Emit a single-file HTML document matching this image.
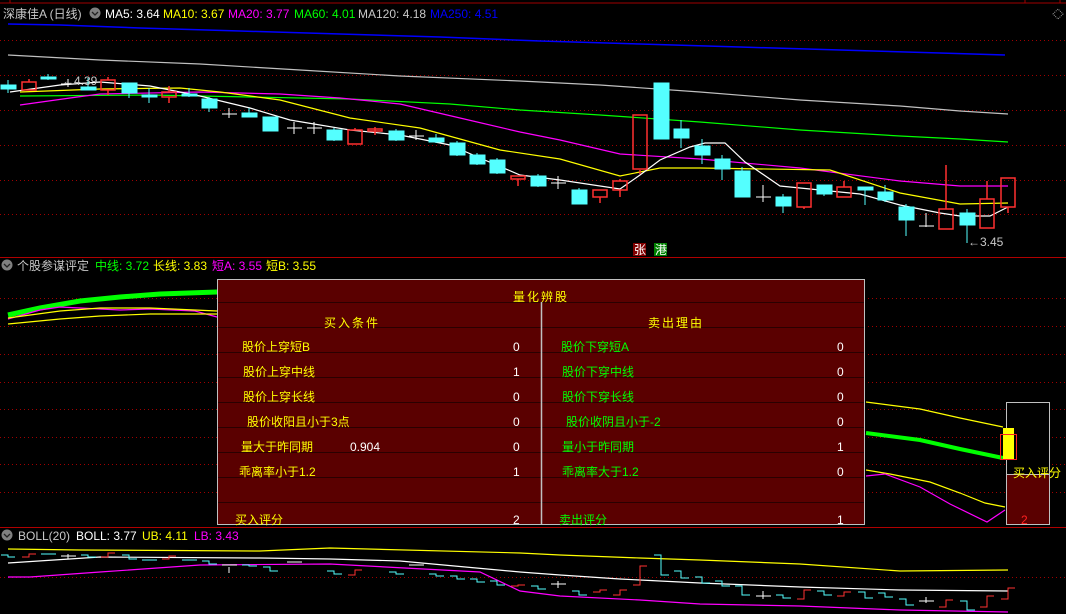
<!DOCTYPE html>
<html><head><meta charset="utf-8"><style>
html,body{margin:0;padding:0;background:#000;width:1066px;height:614px;overflow:hidden}
svg{display:block}
text{font-family:"Liberation Sans","Noto Sans CJK SC",sans-serif;font-size:12px}
</style></head><body>
<svg width="1066" height="614" viewBox="0 0 1066 614" xmlns="http://www.w3.org/2000/svg">
<rect width="1066" height="614" fill="#000"/>
<line x1="0" y1="3" x2="1066" y2="3" stroke="#a00000" stroke-width="1"/>
<line x1="10" y1="0" x2="10" y2="3" stroke="#a00000"/><line x1="1025" y1="0" x2="1025" y2="3" stroke="#a00000"/><line x1="1060" y1="0" x2="1060" y2="3" stroke="#a00000"/>
<g stroke="#a00000" stroke-dasharray="1,3" stroke-width="1">
<line x1="0" y1="40.5" x2="1066" y2="40.5"/><line x1="0" y1="75.5" x2="1066" y2="75.5"/><line x1="0" y1="110.5" x2="1066" y2="110.5"/>
<line x1="0" y1="145.5" x2="1066" y2="145.5"/><line x1="0" y1="180.5" x2="1066" y2="180.5"/><line x1="0" y1="214.5" x2="1066" y2="214.5"/>
<line x1="0" y1="298.5" x2="1066" y2="298.5"/><line x1="0" y1="326.5" x2="1066" y2="326.5"/><line x1="0" y1="354.5" x2="1066" y2="354.5"/><line x1="0" y1="382.5" x2="1066" y2="382.5"/>
<line x1="0" y1="409.5" x2="1066" y2="409.5"/><line x1="0" y1="437.5" x2="1066" y2="437.5"/><line x1="0" y1="464.5" x2="1066" y2="464.5"/><line x1="0" y1="492.5" x2="1066" y2="492.5"/>
<line x1="0" y1="577.5" x2="1066" y2="577.5"/>
</g>
<line x1="0" y1="257.5" x2="1066" y2="257.5" stroke="#b00000"/>
<line x1="0" y1="527.5" x2="1066" y2="527.5" stroke="#b00000"/>

<text x="3" y="18" fill="#c8c8c8" font-size="13">深康佳A (日线)</text>
<circle cx="95" cy="13" r="5.5" fill="#808080"/><path d="M92 12 L95 15 L98 12" stroke="#222" fill="none" stroke-width="1.3"/>
<text x="105" y="18" fill="#fff">MA5: 3.64</text>
<text x="163" y="18" fill="#ffff00">MA10: 3.67</text>
<text x="228" y="18" fill="#ff00ff">MA20: 3.77</text>
<text x="294" y="18" fill="#00ff00">MA60: 4.01</text>
<text x="358" y="18" fill="#c8c8c8">MA120: 4.18</text>
<text x="430" y="18" fill="#0000ff">MA250: 4.51</text>
<path d="M1053 14 L1058 9 L1063 14 L1058 19 Z" fill="none" stroke="#999" stroke-dasharray="1,1"/>

<polyline fill="none" stroke="#0000ff" stroke-width="1.5" points="8,24 60,25 140,28 240,31 340,34 440,37 540,41 640,44 740,47 840,50 940,53 1005,55"/>
<polyline fill="none" stroke="#c0c0c0" stroke-width="1.2" points="8,55 100,60 200,64 300,70 400,76 520,81 600,85 700,92 800,100 900,106 960,111 1008,114"/>
<polyline fill="none" stroke="#00ff00" stroke-width="1.2" points="20,96 150,95 250,97 350,99 450,104 520,110 600,115 700,122 800,130 900,136 960,139 1008,142"/>
<polyline fill="none" stroke="#ff00ff" stroke-width="1.2" points="20,105 70,98 100,94 200,92 280,94 340,98 400,104 460,118 520,132 560,140 620,154 700,159 800,168 900,181 960,186 1008,186"/>
<polyline fill="none" stroke="#ffff00" stroke-width="1.2" points="20,92 100,89 180,88 220,92 280,100 350,118 420,128 500,150 560,159 620,176 660,168 700,168 830,170 900,193 960,204 1008,203"/>
<polyline fill="none" stroke="#ffffff" stroke-width="1.2" points="10,92 60,85 100,82 150,86 200,96 250,108 290,120 350,130 400,135 450,145 480,158 520,175 560,180 620,189 640,175 660,160 690,147 705,143 725,143 745,162 780,186 820,190 860,194 900,205 940,213 960,216 990,216 1008,207"/>

<g stroke-width="1">
<g fill="#54ffff" stroke="#54ffff">
<line x1="8" y1="80" x2="8" y2="93"/><rect x="1" y="85" width="15" height="4"/>
<line x1="48" y1="74" x2="48" y2="80"/><rect x="41" y="77" width="15" height="2"/>
<line x1="88" y1="78" x2="88" y2="90"/><rect x="81" y="87" width="15" height="3"/>
<line x1="129" y1="83" x2="129" y2="98"/><rect x="122" y="83" width="15" height="10"/>
<line x1="149" y1="88" x2="149" y2="103"/><rect x="142" y="95" width="15" height="2"/>
<line x1="189" y1="88" x2="189" y2="97"/><rect x="182" y="94" width="15" height="2"/>
<line x1="209" y1="97" x2="209" y2="112"/><rect x="202" y="99" width="15" height="9"/>
<line x1="249" y1="108" x2="249" y2="117"/><rect x="242" y="113" width="15" height="4"/>
<rect x="263" y="117" width="15" height="14"/>
<line x1="334" y1="128" x2="334" y2="141"/><rect x="327" y="130" width="15" height="10"/>
<line x1="396" y1="129" x2="396" y2="141"/><rect x="389" y="131" width="15" height="9"/>
<line x1="436" y1="134" x2="436" y2="143"/><rect x="429" y="138" width="15" height="4"/>
<line x1="457" y1="141" x2="457" y2="156"/><rect x="450" y="143" width="15" height="12"/>
<line x1="477" y1="153" x2="477" y2="165"/><rect x="470" y="155" width="15" height="9"/>
<line x1="497" y1="158" x2="497" y2="174"/><rect x="490" y="160" width="15" height="13"/>
<line x1="538" y1="174" x2="538" y2="187"/><rect x="531" y="176" width="15" height="10"/>
<line x1="579" y1="188" x2="579" y2="204"/><rect x="572" y="190" width="15" height="14"/>
<rect x="654" y="83" width="15" height="56"/>
<line x1="681" y1="120" x2="681" y2="148"/><rect x="674" y="129" width="15" height="9"/>
<line x1="702" y1="139" x2="702" y2="164"/><rect x="695" y="146" width="15" height="9"/>
<line x1="722" y1="155" x2="722" y2="180"/><rect x="715" y="159" width="15" height="10"/>
<line x1="742" y1="167" x2="742" y2="197"/><rect x="735" y="171" width="15" height="26"/>
<line x1="783" y1="194" x2="783" y2="213"/><rect x="776" y="197" width="15" height="9"/>
<line x1="824" y1="185" x2="824" y2="196"/><rect x="817" y="185" width="15" height="9"/>
<line x1="865" y1="187" x2="865" y2="205"/><rect x="858" y="187" width="15" height="3"/>
<line x1="885" y1="185" x2="885" y2="202"/><rect x="878" y="192" width="15" height="8"/>
<line x1="906" y1="204" x2="906" y2="236"/><rect x="899" y="207" width="15" height="13"/>
<line x1="967" y1="209" x2="967" y2="243"/><rect x="960" y="213" width="15" height="12"/>
</g>
<g fill="none" stroke="#ff3030" stroke-width="1.5">
<line x1="29" y1="79" x2="29" y2="82"/><rect x="22" y="82" width="14" height="8"/>
<line x1="108" y1="77" x2="108" y2="80"/><line x1="108" y1="90" x2="108" y2="95"/><rect x="101" y="80" width="14" height="10"/>
<line x1="169" y1="86" x2="169" y2="92"/><line x1="169" y1="97" x2="169" y2="103"/><rect x="162" y="92" width="14" height="5"/>
<line x1="355" y1="128" x2="355" y2="130"/><rect x="348" y="130" width="14" height="14"/>
<line x1="375" y1="127" x2="375" y2="135"/><rect x="368" y="129" width="14" height="2"/>
<line x1="518" y1="179" x2="518" y2="186"/><rect x="511" y="176" width="14" height="3"/>
<line x1="600" y1="197" x2="600" y2="203"/><rect x="593" y="190" width="14" height="7"/>
<line x1="620" y1="179" x2="620" y2="181"/><line x1="620" y1="190" x2="620" y2="197"/><rect x="613" y="181" width="14" height="9"/>
<line x1="640" y1="170" x2="640" y2="174"/><rect x="633" y="115" width="14" height="54"/>
<line x1="804" y1="207" x2="804" y2="209"/><rect x="797" y="183" width="14" height="24"/>
<line x1="844" y1="181" x2="844" y2="187"/><rect x="837" y="187" width="14" height="10"/>
<line x1="946" y1="165" x2="946" y2="209"/><rect x="939" y="209" width="14" height="20"/>
<line x1="987" y1="181" x2="987" y2="199"/><rect x="980" y="199" width="14" height="29"/>
<line x1="1008" y1="207" x2="1008" y2="213"/><rect x="1001" y="178" width="14" height="29"/>
</g>
<g stroke="#fff">
<line x1="61" y1="84" x2="76" y2="84"/><line x1="68" y1="79" x2="68" y2="87"/>
<line x1="222" y1="114" x2="237" y2="114"/><line x1="229" y1="108" x2="229" y2="118"/>
<line x1="287" y1="128" x2="302" y2="128"/><line x1="294" y1="122" x2="294" y2="134"/>
<line x1="307" y1="128" x2="322" y2="128"/><line x1="314" y1="122" x2="314" y2="134"/>
<line x1="409" y1="136" x2="424" y2="136"/><line x1="416" y1="130" x2="416" y2="140"/>
<line x1="551" y1="183" x2="566" y2="183"/><line x1="558" y1="176" x2="558" y2="189"/>
<line x1="756" y1="197" x2="771" y2="197"/><line x1="763" y1="185" x2="763" y2="202"/>
<line x1="919" y1="226" x2="934" y2="226"/><line x1="926" y1="213" x2="926" y2="227"/>
</g>
</g>
<text x="62" y="85" fill="#c8c8c8" font-size="12">←4.39</text>
<text x="968" y="246" fill="#c8c8c8" font-size="12">←3.45</text>
<rect x="633" y="243" width="13" height="13" fill="#800000"/><text x="634" y="254" fill="#fff" font-size="11">张</text>
<rect x="654" y="243" width="13" height="13" fill="#008000"/><text x="655" y="254" fill="#fff" font-size="11">港</text>

<circle cx="7" cy="265" r="5.5" fill="#808080"/><path d="M4 264 L7 267 L10 264" stroke="#222" fill="none" stroke-width="1.3"/>
<text x="17" y="270" fill="#c8c8c8" font-size="13">个股参谋评定</text>
<text x="95" y="270" fill="#00ff00">中线: 3.72</text>
<text x="153" y="270" fill="#ffff00">长线: 3.83</text>
<text x="212" y="270" fill="#ff00ff">短A: 3.55</text>
<text x="266" y="270" fill="#ffff00">短B: 3.55</text>

<polyline fill="none" stroke="#00ff00" stroke-width="5" points="8,315 40,308 80,301 120,297 160,294 217,292"/>
<polyline fill="none" stroke="#ff00ff" stroke-width="1.2" points="8,319 40,310 60,307 120,310 150,309 195,311 217,317"/>
<polyline fill="none" stroke="#ffff00" stroke-width="1.2" points="8,318 60,311 100,308 150,308 217,311"/>
<polyline fill="none" stroke="#ffff00" stroke-width="1.2" points="8,324 60,319 100,316 150,314 217,314"/>
<polyline fill="none" stroke="#ffff00" stroke-width="1.2" points="866,402 920,409 960,418 1003,427"/>
<polyline fill="none" stroke="#00ff00" stroke-width="4" points="866,433 920,440 960,449 1003,458"/>
<polyline fill="none" stroke="#ffff00" stroke-width="1.2" points="866,470 890,474 930,482 960,493 985,503 1005,507"/>
<polyline fill="none" stroke="#ff00ff" stroke-width="1.2" points="866,476 885,474 920,487 950,504 987,522 1005,510"/>

<rect x="1006.5" y="402.5" width="43" height="122" fill="#000" stroke="#c0c0c0"/>
<rect x="1007" y="474" width="42" height="50" fill="#5a0000"/>
<line x1="1006" y1="474.5" x2="1050" y2="474.5" stroke="#c0c0c0"/>
<rect x="1003" y="428" width="11" height="32" fill="#ffff00"/>
<rect x="1000.5" y="434.5" width="16" height="25" fill="none" stroke="#ff2020"/>
<text x="1013" y="477" fill="#ffff00" font-size="13">买入评分</text>
<text x="1021" y="524" fill="#ff2020" font-size="13">2</text>

<rect x="217.5" y="279.5" width="647" height="245" fill="#5a0000" stroke="#c0c0c0"/>
<g stroke="#2a0000" stroke-width="1">
<line x1="218" y1="302.5" x2="864" y2="302.5"/><line x1="218" y1="327.5" x2="864" y2="327.5"/><line x1="218" y1="352.5" x2="864" y2="352.5"/>
<line x1="218" y1="377.5" x2="864" y2="377.5"/><line x1="218" y1="402.5" x2="864" y2="402.5"/><line x1="218" y1="427.5" x2="864" y2="427.5"/>
<line x1="218" y1="452.5" x2="864" y2="452.5"/><line x1="218" y1="477.5" x2="864" y2="477.5"/><line x1="218" y1="502.5" x2="864" y2="502.5"/>
</g>
<line x1="541.5" y1="302" x2="541.5" y2="524" stroke="#c0c0c0" stroke-width="1.5"/>
<text x="541" y="301" fill="#ffff00" font-size="13" text-anchor="middle" letter-spacing="2">量化辨股</text>
<text x="352" y="327" fill="#ffff00" font-size="13" text-anchor="middle" letter-spacing="2">买入条件</text>
<text x="676" y="327" fill="#ffff00" font-size="13" text-anchor="middle" letter-spacing="2">卖出理由</text>
<g fill="#ffff00">
<text x="242" y="351">股价上穿短B</text>
<text x="243" y="376">股价上穿中线</text>
<text x="243" y="401">股价上穿长线</text>
<text x="247" y="426">股价收阳且小于3点</text>
<text x="241" y="451">量大于昨同期</text>
<text x="239" y="476">乖离率小于1.2</text>
<text x="235" y="524">买入评分</text>
</g>
<g fill="#00ff00">
<text x="561" y="351">股价下穿短A</text>
<text x="562" y="376">股价下穿中线</text>
<text x="562" y="401">股价下穿长线</text>
<text x="566" y="426">股价收阴且小于-2</text>
<text x="562" y="451">量小于昨同期</text>
<text x="562" y="476">乖离率大于1.2</text>
<text x="559" y="524">卖出评分</text>
</g>
<g fill="#fff">
<text x="513" y="351">0</text><text x="513" y="376">1</text><text x="513" y="401">0</text><text x="513" y="426">0</text><text x="513" y="451">0</text><text x="513" y="476">1</text><text x="513" y="524">2</text>
<text x="350" y="451">0.904</text>
<text x="837" y="351">0</text><text x="837" y="376">0</text><text x="837" y="401">0</text><text x="837" y="426">0</text><text x="837" y="451">1</text><text x="837" y="476">0</text><text x="837" y="524">1</text>
</g>

<circle cx="7" cy="535" r="5.5" fill="#808080"/><path d="M4 534 L7 537 L10 534" stroke="#222" fill="none" stroke-width="1.3"/>
<text x="18" y="540" fill="#c8c8c8">BOLL(20)</text>
<text x="76" y="540" fill="#fff">BOLL: 3.77</text>
<text x="142" y="540" fill="#ffff00">UB: 4.11</text>
<text x="194" y="540" fill="#ff00ff">LB: 3.43</text>

<polyline fill="none" stroke="#ffff00" stroke-width="1.2" points="8,549 80,550 260,551 330,548 520,553 560,555 640,558 700,560 800,564 900,571 1008,570"/>
<polyline fill="none" stroke="#ffffff" stroke-width="1.2" points="8,563 100,557 260,558 330,559 400,561 520,572 560,575 620,579 700,583 800,587 900,590 1008,591"/>
<polyline fill="none" stroke="#ff00ff" stroke-width="1.2" points="8,577 30,577 100,572 200,565 330,564 480,572 520,591 560,596 640,600 700,604 800,606 900,610 1008,612"/>

<g fill="none" stroke-width="1">
<g stroke="#54ffff">
<path d="M1 555 H8 V557 H15"/><path d="M41 554 H56"/><path d="M81 555 H88 V557 H96"/><path d="M122 555 H129 V559 H137"/><path d="M142 560 H157"/>
<path d="M182 560 H197"/><path d="M202 561 H209 V564 H217"/><path d="M242 565 H249 V566 H257"/><path d="M263 567 H270 V571 H278"/>
<path d="M327 571 H334 V574 H342"/><path d="M389 572 H396 V574 H404"/><path d="M429 574 H436 V576 H444"/><path d="M450 576 H457 V579 H465"/>
<path d="M470 579 H477 V582 H485"/><path d="M490 581 H497 V585 H505"/><path d="M531 586 H538 V589 H546"/><path d="M572 591 H579 V595 H587"/>
<path d="M654 555 H661 V575 H669"/><path d="M674 571 H681 V578 H689"/><path d="M695 577 H702 V583 H710"/><path d="M715 581 H722 V586 H730"/>
<path d="M735 586 H742 V595 H750"/><path d="M776 595 H783 V598 H791"/><path d="M817 591 H824 V595 H832"/><path d="M858 592 H865 V598 H873"/>
<path d="M878 593 H885 V597 H893"/><path d="M899 599 H906 V605 H914"/><path d="M960 601 H967 V610 H975"/>
</g>
<g stroke="#ff3232">
<path d="M22 557 H29 V554 H36"/><path d="M101 557 H108 V553 H115"/><path d="M162 559 H169 V556 H176"/><path d="M348 575 H355 V570 H362"/>
<path d="M511 586 H518 V585 H525"/><path d="M593 592 H600 V590 H607"/><path d="M613 595 H620 V590 H627"/><path d="M633 585 H640 V566 H647"/>
<path d="M797 599 H804 V590 H811"/><path d="M837 596 H844 V592 H851"/><path d="M939 607 H946 V600 H953"/><path d="M980 607 H987 V596 H994"/><path d="M1001 599 H1008 V588 H1015"/>
</g>
<g stroke="#fff">
<path d="M61 556 H76 M68 554 V559"/><path d="M222 565 H237"/><path d="M229 567 V573"/><path d="M287 562 H302"/><path d="M409 565 H424"/>
<path d="M551 584 H566 M558 581 V588"/><path d="M756 596 H771 M763 591 V599"/><path d="M919 601 H934 M926 597 V603"/>
</g>
</g>
</svg>
</body></html>
